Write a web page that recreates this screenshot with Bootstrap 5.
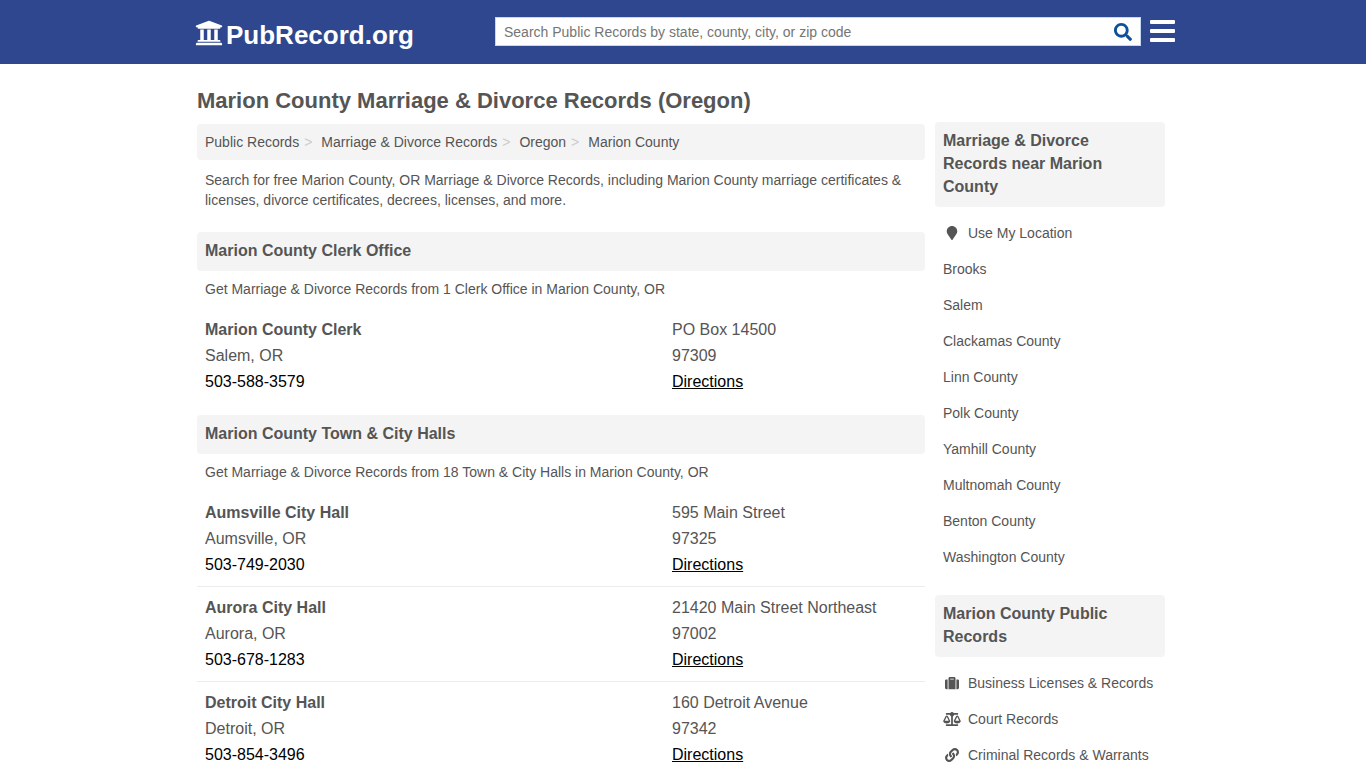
<!DOCTYPE html>
<html lang="en">
<head>
<meta charset="utf-8">
<meta name="viewport" content="width=device-width, initial-scale=1">
<title>Marion County Marriage &amp; Divorce Records (Oregon)</title>
<link href="https://cdn.jsdelivr.net/npm/bootstrap@5.3.0/dist/css/bootstrap.min.css" rel="stylesheet">
<style>
body{font-family:"Liberation Sans",Arial,sans-serif;font-size:14px;line-height:20px;color:#555;background:#fff}
.topbar{background:#2e478e;min-height:64px}
.topbar-inner{max-width:984px;padding:17px 0 0 4px}
.brand{font-size:26px;line-height:32px;font-weight:700;color:#fff;margin-top:2px}
.brand:hover{color:#fff}
.brand svg{width:28px;height:28px;margin-right:3px}
.search-box{flex:0 1 646px;height:29px;background:#fff;border:1px solid #c5d9ee}
.search-box input{font-size:14px;line-height:20px;color:#555;padding:4px 8px 3px}
.search-box input::placeholder{color:#757575;opacity:1}
.search-box button{width:34px;color:#0d519b}
.menu-btn{width:25px;height:22px;margin:3px 0 0 9px}
.menu-btn span{height:4px;background:#fff;border-radius:1px}
.page{max-width:972px;padding:0 4px 0 0;gap:10px}
.side{flex:0 0 230px;padding-top:58px}
h1{font-size:22px;line-height:26px;font-weight:700;margin:24px 0 10px}
.band{background:#f4f4f4;border-radius:4px;padding:8px}
h2.band{font-size:16px;line-height:23px;font-weight:700;margin:0;padding:7px 8px 9px}
.page a{color:#555;text-decoration:none}
.crumbs{--bs-breadcrumb-divider:">";--bs-breadcrumb-divider-color:#ccc;--bs-breadcrumb-item-padding-x:8px;font-size:14px;margin:0}
.crumbs .breadcrumb-item+.breadcrumb-item{padding-left:5px}
.crumbs .breadcrumb-item+.breadcrumb-item::before{padding-right:9px}
.intro{padding:10px 8px 22px;margin:0}
.summary{padding:8px 8px 10px;margin:0}
.offices{margin-bottom:12px}
.office{font-size:16px;line-height:26px;padding:8px}
.office+.office{border-top:1px solid #ececec}
.office .place{flex:0 0 245px}
.page .office .action{color:#000}
.page .office .map-link{text-decoration:underline}
.side ul{margin:8px 0 20px}
.side li a{padding:8px;gap:7px}
.side li svg{width:18px;height:14px}
@media (max-width:800px){
.page{flex-direction:column;padding:0 8px}
.side{flex:none;padding-top:0}
.office .place{flex:0 1 245px}
.topbar-inner{padding:17px 8px 0}
}
</style>
</head>
<body>
<header class="topbar d-flex">
  <div class="topbar-inner container-fluid d-flex align-items-start">
    <a class="brand d-flex align-items-center text-decoration-none" href="#">
      <svg class="mb-1" viewBox="0 0 512 512" fill="currentColor" aria-hidden="true"><path d="M496 128v16a8 8 0 0 1-8 8h-24v12c0 6.627-5.373 12-12 12H60c-6.627 0-12-5.373-12-12v-12H24a8 8 0 0 1-8-8v-16a8 8 0 0 1 4.941-7.392l232-88a7.996 7.996 0 0 1 6.118 0l232 88A8 8 0 0 1 496 128zm-24 304H40c-13.255 0-24 10.745-24 24v16a8 8 0 0 0 8 8h464a8 8 0 0 0 8-8v-16c0-13.255-10.745-24-24-24zM96 192v192H60c-6.627 0-12 5.373-12 12v20h416v-20c0-6.627-5.373-12-12-12h-36V192h-64v192h-64V192h-64v192h-64V192H96z"/></svg>PubRecord.org</a>
    <form class="search-box d-flex ms-auto" role="search">
      <input class="flex-grow-1 border-0 bg-transparent w-100" type="text" aria-label="Search Public Records" placeholder="Search Public Records by state, county, city, or zip code">
      <button class="border-0 bg-transparent p-0 d-flex align-items-center justify-content-center flex-shrink-0" type="submit" aria-label="Search">
        <svg width="18" height="18" viewBox="0 0 512 512" fill="currentColor" aria-hidden="true"><path d="M505 442.7L405.3 343c-4.5-4.5-10.6-7-17-7H372c27.6-35.3 44-79.7 44-128C416 93.1 322.9 0 208 0S0 93.1 0 208s93.1 208 208 208c48.3 0 92.7-16.4 128-44v16.3c0 6.4 2.5 12.5 7 17l99.7 99.7c9.4 9.4 24.6 9.4 33.9 0l28.3-28.3c9.4-9.4 9.4-24.6.1-34zM208 336c-70.7 0-128-57.2-128-128 0-70.7 57.2-128 128-128 70.7 0 128 57.2 128 128 0 70.7-57.2 128-128 128z"/></svg>
      </button>
    </form>
    <button class="menu-btn border-0 bg-transparent p-0 d-flex flex-column justify-content-between flex-shrink-0" type="button" aria-label="Menu"><span class="w-100"></span><span class="w-100"></span><span class="w-100"></span></button>
  </div>
</header>

<div class="page container-fluid d-flex">
  <main class="flex-grow-1">
    <h1>Marion County Marriage &amp; Divorce Records (Oregon)</h1>
    <nav aria-label="breadcrumb">
      <ol class="breadcrumb crumbs band">
        <li class="breadcrumb-item"><a href="#">Public Records</a></li>
        <li class="breadcrumb-item"><a href="#">Marriage &amp; Divorce Records</a></li>
        <li class="breadcrumb-item"><a href="#">Oregon</a></li>
        <li class="breadcrumb-item"><a href="#">Marion County</a></li>
      </ol>
    </nav>
    <p class="intro">Search for free Marion County, OR Marriage &amp; Divorce Records, including Marion County marriage certificates &amp; licenses, divorce certificates, decrees, licenses, and more.</p>

    <section class="offices">
      <h2 class="band">Marion County Clerk Office</h2>
      <p class="summary">Get Marriage &amp; Divorce Records from 1 Clerk Office in Marion County, OR</p>
      <div class="office d-flex">
        <div class="flex-grow-1"><a class="fw-bold" href="#">Marion County Clerk</a><div>Salem, OR</div><a class="action" href="tel:503-588-3579">503-588-3579</a></div>
        <div class="place"><div>PO Box 14500</div><div>97309</div><a class="action map-link" href="#">Directions</a></div>
      </div>
    </section>

    <section class="offices">
      <h2 class="band">Marion County Town &amp; City Halls</h2>
      <p class="summary">Get Marriage &amp; Divorce Records from 18 Town &amp; City Halls in Marion County, OR</p>
      <div class="office d-flex">
        <div class="flex-grow-1"><a class="fw-bold" href="#">Aumsville City Hall</a><div>Aumsville, OR</div><a class="action" href="tel:503-749-2030">503-749-2030</a></div>
        <div class="place"><div>595 Main Street</div><div>97325</div><a class="action map-link" href="#">Directions</a></div>
      </div>
      <div class="office d-flex">
        <div class="flex-grow-1"><a class="fw-bold" href="#">Aurora City Hall</a><div>Aurora, OR</div><a class="action" href="tel:503-678-1283">503-678-1283</a></div>
        <div class="place"><div>21420 Main Street Northeast</div><div>97002</div><a class="action map-link" href="#">Directions</a></div>
      </div>
      <div class="office d-flex">
        <div class="flex-grow-1"><a class="fw-bold" href="#">Detroit City Hall</a><div>Detroit, OR</div><a class="action" href="tel:503-854-3496">503-854-3496</a></div>
        <div class="place"><div>160 Detroit Avenue</div><div>97342</div><a class="action map-link" href="#">Directions</a></div>
      </div>
    </section>
  </main>

  <aside class="side">
    <h2 class="band">Marriage &amp; Divorce Records near Marion County</h2>
    <ul class="list-unstyled">
      <li><a class="d-flex align-items-center" href="#"><svg viewBox="0 0 384 512" fill="currentColor" aria-hidden="true"><path d="M172.268 501.67C26.97 291.031 0 269.413 0 192 0 85.961 85.961 0 192 0s192 85.961 192 192c0 77.413-26.97 99.031-172.268 309.67-9.535 13.774-29.93 13.773-39.464 0z"/></svg>Use My Location</a></li>
      <li><a class="d-block" href="#">Brooks</a></li>
      <li><a class="d-block" href="#">Salem</a></li>
      <li><a class="d-block" href="#">Clackamas County</a></li>
      <li><a class="d-block" href="#">Linn County</a></li>
      <li><a class="d-block" href="#">Polk County</a></li>
      <li><a class="d-block" href="#">Yamhill County</a></li>
      <li><a class="d-block" href="#">Multnomah County</a></li>
      <li><a class="d-block" href="#">Benton County</a></li>
      <li><a class="d-block" href="#">Washington County</a></li>
    </ul>
    <h2 class="band">Marion County Public Records</h2>
    <ul class="list-unstyled">
      <li><a class="d-flex align-items-center" href="#"><svg viewBox="0 0 512 512" fill="currentColor" aria-hidden="true"><path d="M128 480h256V80c0-26.5-21.5-48-48-48H176c-26.5 0-48 21.5-48 48v400zm64-384h128v32H192V96zm320 80v256c0 26.5-21.5 48-48 48h-48V128h48c26.5 0 48 21.5 48 48zM96 480H48c-26.5 0-48-21.5-48-48V176c0-26.5 21.5-48 48-48h48v352z"/></svg>Business Licenses &amp; Records</a></li>
      <li><a class="d-flex align-items-center" href="#"><svg viewBox="0 0 640 512" fill="currentColor" aria-hidden="true"><path d="M256 336h-.02c0-16.18 1.34-8.73-85.05-181.51-17.65-35.29-68.19-35.36-85.87 0C-2.06 328.75.02 320.33.02 336H0c0 44.18 57.31 80 128 80s128-35.82 128-80zM128 176l72 144H56l72-144zm511.98 160c0-16.18 1.34-8.73-85.05-181.51-17.65-35.29-68.19-35.36-85.87 0-87.12 174.26-85.04 165.84-85.04 181.51H384c0 44.18 57.31 80 128 80s128-35.82 128-80h-.02zM440 320l72-144 72 144H440zm88 128H352V153.25c23.51-10.29 41.16-31.48 46.39-57.25H528c8.84 0 16-7.16 16-16V48c0-8.84-7.16-16-16-16H383.64C369.04 12.68 346.09 0 320 0s-49.04 12.68-63.64 32H112c-8.84 0-16 7.16-16 16v32c0 8.84 7.16 16 16 16h129.61c5.23 25.76 22.87 46.96 46.39 57.25V448H112c-8.84 0-16 7.16-16 16v32c0 8.84 7.16 16 16 16h416c8.84 0 16-7.16 16-16v-32c0-8.84-7.16-16-16-16z"/></svg>Court Records</a></li>
      <li><a class="d-flex align-items-center" href="#"><svg viewBox="0 0 512 512" fill="currentColor" aria-hidden="true"><path d="M326.612 185.391c59.747 59.809 58.927 155.698.36 214.59-.11.12-.24.25-.36.37l-67.2 67.2c-59.27 59.27-155.699 59.262-214.96 0-59.27-59.26-59.27-155.7 0-214.96l37.106-37.106c9.84-9.84 26.786-3.3 27.294 10.606.648 17.722 3.826 35.527 9.69 52.721 1.986 5.822.567 12.262-3.783 16.612l-13.087 13.087c-28.026 28.026-28.905 73.66-1.155 101.96 28.024 28.579 74.086 28.749 102.325.51l67.2-67.19c28.191-28.191 28.073-73.757 0-101.83-3.701-3.694-7.429-6.564-10.341-8.569a16.037 16.037 0 0 1-6.947-12.606c-.396-10.567 3.348-21.456 11.698-29.806l21.054-21.055c5.521-5.521 14.182-6.199 20.584-1.731a152.482 152.482 0 0 1 20.522 17.197zM467.547 44.449c-59.261-59.262-155.69-59.27-214.96 0l-67.2 67.2c-.12.12-.25.25-.36.37-58.566 58.892-59.387 154.781.36 214.59a152.454 152.454 0 0 0 20.521 17.196c6.402 4.468 15.064 3.789 20.584-1.731l21.054-21.055c8.35-8.35 12.094-19.239 11.698-29.806a16.037 16.037 0 0 0-6.947-12.606c-2.912-2.005-6.64-4.875-10.341-8.569-28.073-28.073-28.191-73.639 0-101.83l67.2-67.19c28.239-28.239 74.3-28.069 102.325.51 27.75 28.3 26.872 73.934-1.155 101.96l-13.087 13.087c-4.35 4.35-5.769 10.79-3.783 16.612 5.864 17.194 9.042 34.999 9.69 52.721.509 13.906 17.454 20.446 27.294 10.606l37.106-37.106c59.271-59.259 59.271-155.699.001-214.959z"/></svg>Criminal Records &amp; Warrants</a></li>
    </ul>
  </aside>
</div>
<script src="https://cdn.jsdelivr.net/npm/bootstrap@5.3.0/dist/js/bootstrap.bundle.min.js"></script>
</body>
</html>
